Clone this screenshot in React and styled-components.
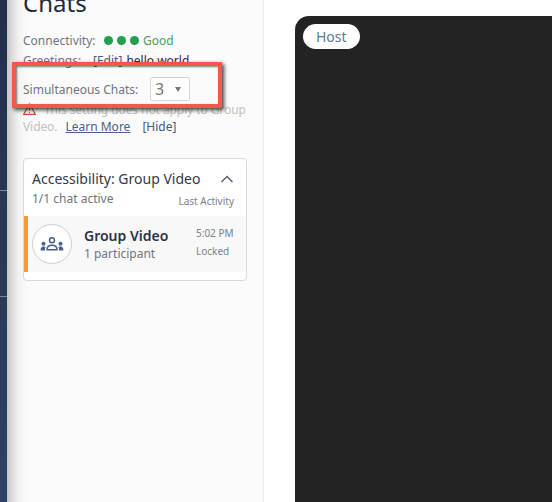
import React from 'react';
import styled, { createGlobalStyle } from 'styled-components';

const Global = createGlobalStyle`
  html, body { margin: 0; padding: 0; height: 100%; overflow: hidden; background: #fff; }
  body { font-family: "Noto Sans", "Open Sans", sans-serif; }
`;

const Page = styled.div`
  display: flex;
  position: relative;
  width: 552px;
  height: 502px;
  overflow: hidden;
  background: #fff;
`;

const Rail = styled.div`
  display: flex;
  flex-direction: column;
  width: 7px;
  flex: none;
  background: linear-gradient(#212f4a, #2f4263);
`;

const RailLine = styled.div`
  height: 1px;
  margin-top: ${(p) => p.$top}px;
  background: #7b869a;
`;

const Panel = styled.aside`
  width: 257px;
  flex: none;
  box-sizing: border-box;
  padding: 0 16px;
  background: linear-gradient(90deg, #c4c4c4 0, #dcdcdc 5px, #f3f3f3 12px, #fbfbfb 22px);
  border-right: 1px solid #ececec;
`;

const Title = styled.h1`
  margin: -15px 0 0;
  font-size: 24px;
  line-height: 36px;
  font-weight: 400;
  color: #1f2a3c;
`;

const InfoRow = styled.div`
  display: flex;
  align-items: center;
  height: 20px;
  margin-top: ${(p) => p.$top || 0}px;
  font-size: 12px;
  color: #6f7480;
  white-space: nowrap;
`;

const Label = styled.span`
  width: ${(p) => p.$width}px;
  flex: none;
`;

const Dot = styled.span`
  width: 9px;
  height: 9px;
  margin-right: 4px;
  border-radius: 50%;
  background: #23a04d;
`;

const Good = styled.span`
  color: #4f9a5c;
`;

const EditLink = styled.span`
  color: #4a5878;
  margin-right: 4px;
`;

const Greeting = styled.span`
  color: #2b2f38;
`;

const Select = styled.div`
  display: flex;
  align-items: center;
  justify-content: space-between;
  box-sizing: border-box;
  width: 40px;
  height: 24px;
  padding: 0 8px 0 4px;
  border: 1px solid #d5d5d5;
  border-radius: 2px;
  background: #fff;
  font-size: 16px;
  color: #777;
`;

const Caret = styled.span`
  width: 0;
  height: 0;
  border-left: 3.5px solid transparent;
  border-right: 3.5px solid transparent;
  border-top: 5px solid #777;
`;

const Notice = styled.div`
  margin-top: 2px;
  width: 228px;
  font-size: 12px;
  line-height: 17px;
  letter-spacing: -0.08px;
  color: #c2c0bb;
`;

const Warn = styled.svg`
  width: 13px;
  height: 12px;
  margin-right: 8px;
  vertical-align: -1px;
`;

const LearnMore = styled.a`
  margin: 0 12px 0 8px;
  letter-spacing: 0;
  color: #4a5f8e;
  text-decoration: underline;
`;

const Hide = styled.span`
  letter-spacing: 0;
  color: #4a5878;
`;

const Card = styled.section`
  box-sizing: border-box;
  width: 224px;
  height: 123px;
  margin-top: 23px;
  border: 1px solid #d8d8d8;
  border-radius: 4px;
  background: #fff;
`;

const CardHead = styled.div`
  height: 57px;
  padding: 10px 12px 0 8px;
  box-sizing: border-box;
`;

const HeadRow = styled.div`
  display: flex;
  align-items: center;
  justify-content: space-between;
`;

const CardTitle = styled.div`
  font-size: 14px;
  line-height: 20px;
  color: #333a47;
  white-space: nowrap;
`;

const Chevron = styled.svg`
  width: 14px;
  height: 10px;
  flex: none;
`;

const Active = styled.div`
  font-size: 12px;
  line-height: 20px;
  color: #6f7480;
`;

const ColumnNote = styled.div`
  font-size: 10px;
  line-height: 16px;
  margin-top: 3px;
  color: #7a7f88;
  white-space: nowrap;
`;

const ChatRow = styled.div`
  display: flex;
  align-items: center;
  height: 56px;
  border-left: 4px solid #fb9a2f;
  background: #f8f8f8;
`;

const Avatar = styled.div`
  display: flex;
  align-items: center;
  justify-content: center;
  box-sizing: border-box;
  width: 40px;
  height: 40px;
  margin-left: 4px;
  flex: none;
  border: 1px solid #cfcfcf;
  border-radius: 50%;
  background: #fff;
`;

const ChatText = styled.div`
  margin-left: 12px;
  padding-top: 2px;
  flex: 1;
`;

const ChatName = styled.div`
  font-size: 14px;
  line-height: 18px;
  font-weight: 600;
  color: #2b3345;
`;

const ChatSub = styled.div`
  font-size: 12px;
  line-height: 18px;
  color: #6f7480;
`;

const ChatMeta = styled.div`
  display: flex;
  flex-direction: column;
  gap: 5px;
  width: 50px;
  margin-bottom: 3px;
  font-size: 10px;
  line-height: 13px;
  color: #7a7f88;
`;

const Main = styled.main`
  flex: 1;
  padding: 16px 0 0 31px;
`;

const Video = styled.div`
  height: 100%;
  padding: 8px 0 0 8px;
  box-sizing: border-box;
  border-top-left-radius: 14px;
  background: #232323;
`;

const HostPill = styled.span`
  display: inline-block;
  height: 25px;
  padding: 0 13px;
  border-radius: 13px;
  background: #fff;
  font-size: 14px;
  line-height: 25px;
  color: #667892;
`;

const Callout = styled.div`
  position: absolute;
  left: 12px;
  top: 62px;
  width: 210px;
  height: 46px;
  box-sizing: border-box;
  border: 4px solid #f4584c;
  box-shadow: 2px 2px 4px rgba(0, 0, 0, 0.75), inset 1px 1px 2px rgba(0, 0, 0, 0.5);
`;

export default function App() {
  return (
    <Page>
      <Global />
      <Rail>
        <RailLine $top={190} />
        <RailLine $top={105} />
      </Rail>
      <Panel>
        <Title>Chats</Title>
        <InfoRow $top={9}>
          <Label $width={81}>Connectivity:</Label>
          <Dot /><Dot /><Dot />
          <Good>Good</Good>
        </InfoRow>
        <InfoRow>
          <Label $width={70}>Greetings:</Label>
          <EditLink>[Edit]</EditLink>
          <Greeting>hello world</Greeting>
        </InfoRow>
        <InfoRow $top={9}>
          <Label $width={127}>Simultaneous Chats:</Label>
          <Select>3<Caret /></Select>
        </InfoRow>
        <Notice>
          <Warn viewBox="0 0 13 12">
            <path d="M6.500 1 12.400 11.400H.6Z" fill="none" stroke="#e0453a" strokeWidth="1.2" />
            <path d="M6.500 4.500V8M6.500 9v1" stroke="#e0453a" strokeWidth="1" />
          </Warn>
          This setting does not apply to Group Video.
          <LearnMore>Learn More</LearnMore>
          <Hide>[Hide]</Hide>
        </Notice>
        <Card>
          <CardHead>
            <HeadRow>
              <CardTitle>Accessibility: Group Video</CardTitle>
              <Chevron viewBox="0 0 14 10">
                <path d="M1.500 8 7 2.500 12.500 8" fill="none" stroke="#5c6470" strokeWidth="1.5" />
              </Chevron>
            </HeadRow>
            <HeadRow>
              <Active>1/1 chat active</Active>
              <ColumnNote>Last Activity</ColumnNote>
            </HeadRow>
          </CardHead>
          <ChatRow>
            <Avatar>
              <svg width="26" height="14" viewBox="0 0 26 14" fill="#4b5f86">
                <circle cx="13" cy="3.200" r="2.500" fill="none" stroke="#4b5f86" strokeWidth="1.500" />
                <path d="M8 12.800c0-3 2-4.500 5-4.500s5 1.500 5 4.500Z" fill="none" stroke="#4b5f86" strokeWidth="1.500" />
                <circle cx="4.500" cy="6.800" r="2" />
                <circle cx="21.500" cy="6.800" r="2" />
                <path d="M1.500 13.500c0-2.600 1.200-4 3-4 1 0 1.500.2 2 .6-.4.900-.6 2-.6 3.400ZM24.500 13.500c0-2.600-1.200-4-3-4-1 0-1.500.2-2 .6.400.9.600 2 .6 3.400Z" />
              </svg>
            </Avatar>
            <ChatText>
              <ChatName>Group Video</ChatName>
              <ChatSub>1 participant</ChatSub>
            </ChatText>
            <ChatMeta>
              <span>5:02 PM</span>
              <span>Locked</span>
            </ChatMeta>
          </ChatRow>
        </Card>
      </Panel>
      <Main>
        <Video>
          <HostPill>Host</HostPill>
        </Video>
      </Main>
      <Callout />
    </Page>
  );
}
